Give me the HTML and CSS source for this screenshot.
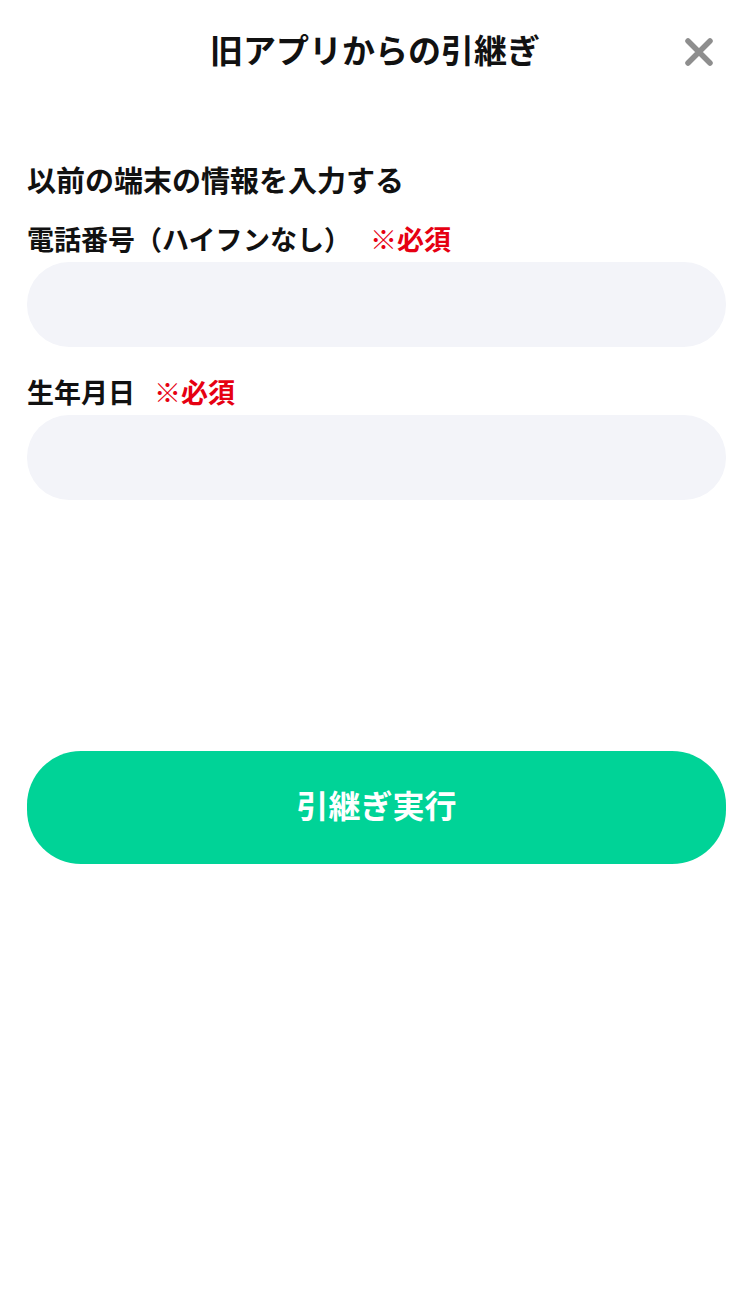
FILE: index.html
```html
<!DOCTYPE html>
<html lang="ja">
<head>
<meta charset="utf-8">
<title>旧アプリからの引継ぎ</title>
<link rel="stylesheet" href="styles.css">
</head>
<body>
<div class="page">
  <header class="topbar">
    <h1 class="title">旧アプリからの引継ぎ</h1>
    <button class="close" aria-label="閉じる">
      <svg width="28" height="28" viewBox="0 0 28 28"><path d="M3 3 L25 25 M25 3 L3 25" stroke="#8e8e8e" stroke-width="5.5" stroke-linecap="round" fill="none"/></svg>
    </button>
  </header>
  <main class="form">
    <h2 class="section">以前の端末の情報を入力する</h2>
    <div class="field">
      <label class="label">電話番号（ハイフンなし）<span class="req">※必須</span></label>
      <input class="input" type="tel">
    </div>
    <div class="field">
      <label class="label">生年月日<span class="req">※必須</span></label>
      <input class="input" type="text">
    </div>
    <button class="submit">引継ぎ実行</button>
  </main>
</div>
</body>
</html>
```

FILE: styles.css
```css
* { box-sizing: border-box; }
html, body { margin: 0; padding: 0; background: #fff; }
body {
  font-family: "Noto Sans CJK JP", "Noto Sans", sans-serif;
  color: #111;
}
.page { width: 750px; min-height: 1290px; }
.topbar {
  position: relative;
  height: 104px;
  display: flex;
  align-items: center;
  justify-content: center;
  padding-bottom: 6px;
}
.title {
  margin: 0;
  font-size: 33px;
  font-weight: 700;
  line-height: 1;
}
.close {
  position: absolute;
  right: 37px;
  top: 38px;
  width: 28px;
  height: 28px;
  padding: 0;
  border: 0;
  background: none;
  display: flex;
}
.form {
  padding: 55px 24px 0 27px;
  display: flex;
  flex-direction: column;
}
.section {
  margin: 0;
  font-size: 29px;
  font-weight: 700;
  line-height: 40px;
}
.field {
  display: flex;
  flex-direction: column;
}
.field:first-of-type { margin-top: 21px; }
.field + .field { margin-top: 26px; }
.label {
  font-size: 27px;
  font-weight: 700;
  line-height: 38px;
  margin-bottom: 4px;
}
.req {
  color: #e60012;
  margin-left: 19px;
}
.input {
  width: 699px;
  height: 85px;
  border: 0;
  border-radius: 42px;
  background: #f3f4f9;
  outline: none;
  font: inherit;
  padding: 0 30px;
}
.submit {
  margin-top: 251px;
  width: 699px;
  height: 113px;
  border: 0;
  border-radius: 54px;
  background: #00d397;
  color: #fff;
  font-family: inherit;
  font-size: 32px;
  font-weight: 700;
  padding: 0 0 7px;
}
```
